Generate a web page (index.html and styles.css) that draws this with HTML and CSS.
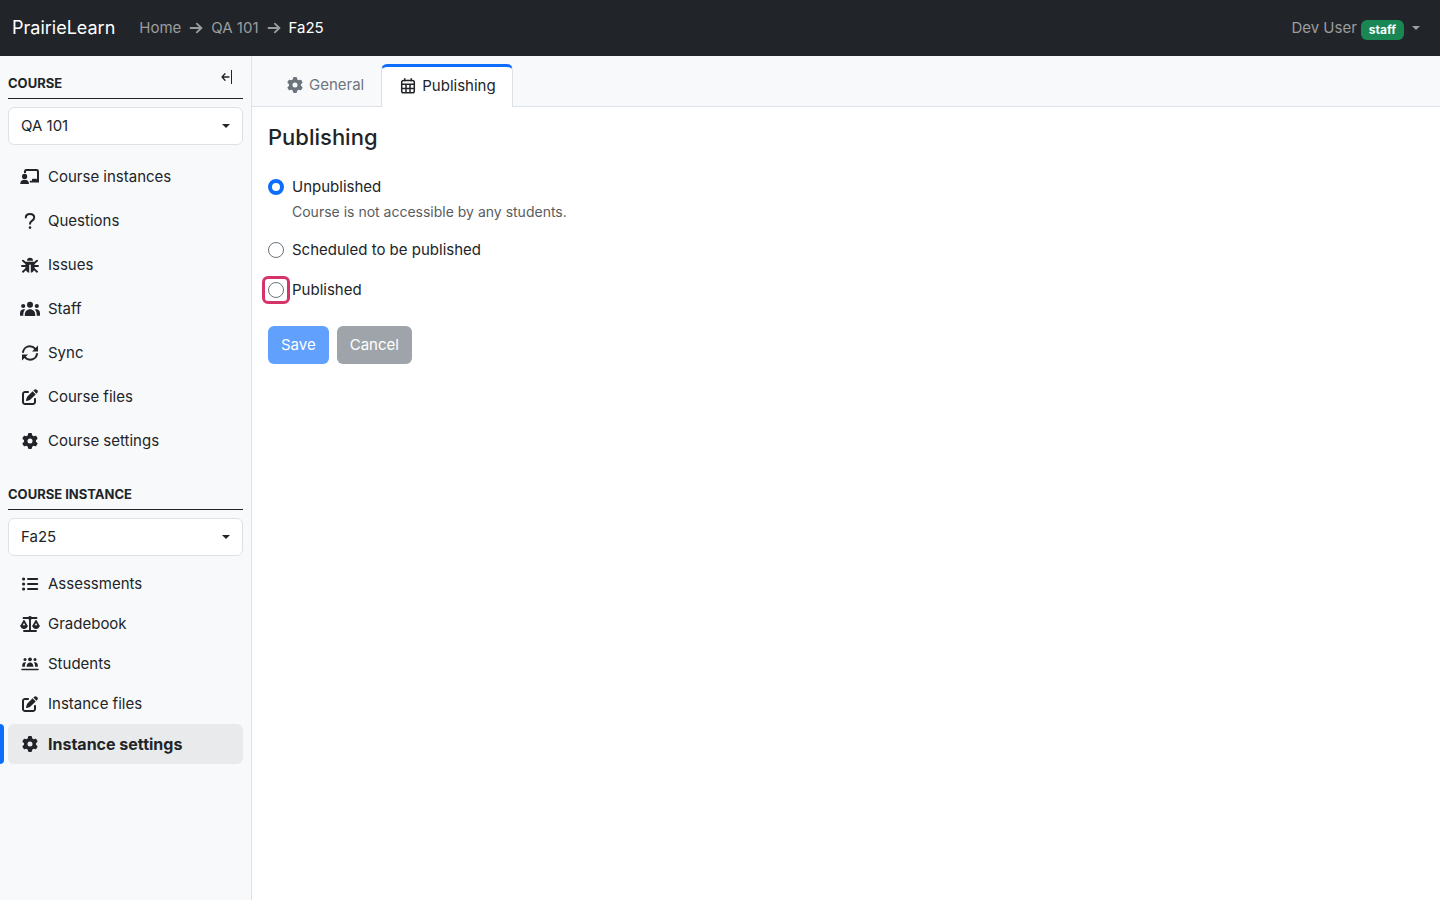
FILE: index.html
```html
<!DOCTYPE html>
<html lang="en">
<head>
<meta charset="utf-8">
<meta name="viewport" content="width=device-width, initial-scale=1">
<title>Publishing | PrairieLearn</title>
<link rel="stylesheet" href="styles.css">
</head>

<body>

<!-- icons that are used more than once -->
<svg class="icon-defs" aria-hidden="true">
  <symbol id="icon-gear" viewBox="-64 0 640 512">
    <path d="M495.9 166.6c3.2 8.7 .5 18.4-6.4 24.6l-43.3 39.4c1.1 8.3 1.7 16.8 1.7 25.4s-.6 17.1-1.7 25.4l43.3 39.4c6.9 6.2 9.6 15.9 6.4 24.6c-4.4 11.9-9.7 23.3-15.8 34.3l-4.7 8.1c-6.6 11-14 21.4-22.1 31.2c-5.9 7.2-15.7 9.6-24.5 6.8l-55.7-17.7c-13.4 10.3-28.2 18.9-44 25.4l-12.5 57.1c-2 9.1-9 16.3-18.2 17.8c-13.8 2.3-28 3.5-42.5 3.5s-28.7-1.2-42.5-3.5c-9.2-1.5-16.2-8.7-18.2-17.8l-12.5-57.1c-15.8-6.5-30.6-15.1-44-25.4L83.1 425.9c-8.8 2.8-18.6 .3-24.5-6.8c-8.1-9.8-15.5-20.2-22.1-31.2l-4.7-8.1c-6.1-11-11.4-22.4-15.8-34.3c-3.2-8.7-.5-18.4 6.4-24.6l43.3-39.4C64.6 273.1 64 264.6 64 256s.6-17.1 1.7-25.4L22.4 191.2c-6.9-6.2-9.6-15.9-6.4-24.6c4.4-11.9 9.7-23.3 15.8-34.3l4.7-8.1c6.6-11 14-21.4 22.1-31.2c5.9-7.2 15.7-9.6 24.5-6.8l55.7 17.7c13.4-10.3 28.2-18.9 44-25.4l12.5-57.1c2-9.1 9-16.3 18.2-17.8C227.3 1.2 241.5 0 256 0s28.7 1.2 42.5 3.5c9.2 1.5 16.2 8.7 18.2 17.8l12.5 57.1c15.8 6.5 30.6 15.1 44 25.4l55.7-17.7c8.8-2.8 18.6-.3 24.5 6.8c8.1 9.8 15.5 20.2 22.1 31.2l4.7 8.1c6.1 11 11.4 22.4 15.8 34.3zM256 336a80 80 0 1 0 0-160 80 80 0 1 0 0 160z"/>
  </symbol>
  <symbol id="icon-edit" viewBox="-64 0 640 512">
    <path d="M471.6 21.7c-21.9-21.9-57.3-21.9-79.2 0L362.3 51.7l97.9 97.9 30.1-30.1c21.9-21.9 21.9-57.3 0-79.2L471.6 21.7zm-299.2 220c-6.1 6.1-10.8 13.6-13.5 21.9l-29.6 88.8c-2.9 8.6-.6 18.1 5.8 24.6s15.9 8.7 24.6 5.8l88.8-29.6c8.2-2.7 15.7-7.4 21.9-13.5L437.7 172.3 339.7 74.3 172.4 241.7zM96 64C43 64 0 107 0 160V416c0 53 43 96 96 96H352c53 0 96-43 96-96V320c0-17.7-14.3-32-32-32s-32 14.3-32 32v96c0 17.7-14.3 32-32 32H96c-17.7 0-32-14.3-32-32V160c0-17.7 14.3-32 32-32h96c17.7 0 32-14.3 32-32s-14.3-32-32-32H96z"/>
  </symbol>
  <symbol id="icon-arrow" viewBox="0 0 14 14">
    <path d="M1.5 7h11M7.8 2.6L12.4 7l-4.6 4.4" fill="none" stroke="currentColor" stroke-width="1.8" stroke-linecap="round" stroke-linejoin="round"/>
  </symbol>
</svg>

<header class="navbar">
  <a class="brand" href="#">PrairieLearn</a>
  <nav class="crumbs" aria-label="Breadcrumb">
    <a href="#">Home</a>
    <svg class="crumb-arrow"><use href="#icon-arrow"/></svg>
    <a href="#">QA 101</a>
    <svg class="crumb-arrow"><use href="#icon-arrow"/></svg>
    <a href="#" class="current" aria-current="page">Fa25</a>
  </nav>
  <button type="button" class="user-menu">
    <span>Dev User</span>
    <span class="badge">staff</span>
    <span class="caret"></span>
  </button>
</header>

<div class="app">
  <aside class="sidebar">
    <div class="side-head">
      <h2>Course</h2>
      <button type="button" class="collapse" aria-label="Collapse side nav">
        <svg width="12" height="14" viewBox="0 0 12 14" fill="none" stroke="currentColor">
          <path d="M8 7H1M4 3.8L1 7l3 3.2" stroke-width="1.3" stroke-linecap="round" stroke-linejoin="round"/>
          <path d="M10.500 0v14" stroke-width="1"/>
        </svg>
      </button>
    </div>
    <div class="picker">
      <select aria-label="Course">
        <option>QA 101</option>
      </select>
    </div>
    <nav class="side-nav roomy" aria-label="Course">
      <a href="#">
        <svg class="icon" viewBox="0 0 20 16">
          <path d="M5 4V2.4A1.4 1.4 0 0 1 6.4 1H16.600A1.4 1.4 0 0 1 18 2.400V12" fill="none" stroke="currentColor" stroke-width="2"/>
          <path d="M9.800 13.500h9.200v-1.700h-2V10.600a.8.800 0 0 0-.8-.8h-3.400a.8.800 0 0 0-.8.800v1.200h-2.200z"/>
          <circle cx="4.600" cy="7.400" r="2.600"/>
          <path d="M.2 15c0-2.700 1.700-4.200 4.400-4.200S9 12.300 9 15z"/>
        </svg>
        Course instances
      </a>
      <a href="#">
        <svg class="icon" viewBox="0 0 20 16">
          <path d="M5.800 4.600C5.800 2.400 7.400 1 10 1s4.200 1.500 4.200 3.500c0 1.700-1 2.500-2.300 3.300-1.300.8-1.900 1.300-1.900 2.900" fill="none" stroke="currentColor" stroke-width="2" stroke-linecap="round"/>
          <circle cx="10" cy="14.600" r="1.300"/>
        </svg>
        Questions
      </a>
      <a href="#">
        <svg class="icon" viewBox="0 0 20 16">
          <path d="M7 3.700a3 3 0 0 1 6 0z"/>
          <path d="M7 4.800h6c.9 0 1.500.7 1.500 1.500V11c0 2.500-1.500 4.300-3.700 4.700V8.200a.8.800 0 0 0-1.600 0v7.500C7 15.300 5.500 13.500 5.500 11V6.300c0-.8.600-1.500 1.500-1.500z"/>
          <path d="M6.300 6.500L3 3.700M13.700 6.500L17 3.700M6 9H2M14 9h4M6.300 11.600L3 14.700M13.700 11.600l3.300 3.100" fill="none" stroke="currentColor" stroke-width="1.900" stroke-linecap="round"/>
        </svg>
        Issues
      </a>
      <a href="#">
        <svg class="icon" viewBox="0 0 20 16">
          <circle cx="10" cy="3.800" r="3"/>
          <circle cx="3.200" cy="5" r="2.100"/>
          <circle cx="16.800" cy="5" r="2.100"/>
          <path d="M4.800 15v-1.300C4.800 10.600 7 8.300 10 8.300s5.200 2.300 5.200 5.400V15z"/>
          <path d="M0 14.800v-2.600c0-2.600 2.500-4.500 5.200-3.600C4 9.900 3.300 11.500 3.300 13.600v1.200zM20 14.800v-2.600c0-2.600-2.500-4.500-5.200-3.600 1.200 1.300 1.900 2.900 1.900 5v1.200z"/>
        </svg>
        Staff
      </a>
      <a href="#">
        <svg class="icon" viewBox="0 0 20 16">
          <path d="M3 7C3.500 3.700 6.400 1.300 9.800 1.300c2.400 0 4.100 1 5.500 2.600M17 9c-.5 3.300-3.400 5.700-6.800 5.700-2.400 0-4.100-1-5.500-2.600" fill="none" stroke="currentColor" stroke-width="2" stroke-linecap="round"/>
          <path d="M18 .6v6h-6zM2 15.400v-6h6z"/>
        </svg>
        Sync
      </a>
      <a href="#">
        <svg class="icon"><use href="#icon-edit"/></svg>
        Course files
      </a>
      <a href="#">
        <svg class="icon"><use href="#icon-gear"/></svg>
        Course settings
      </a>
    </nav>

    <div class="side-head">
      <h2>Course instance</h2>
    </div>
    <div class="picker">
      <select aria-label="Course instance">
        <option>Fa25</option>
      </select>
    </div>
    <nav class="side-nav" aria-label="Course instance">
      <a href="#">
        <svg class="icon" viewBox="0 0 20 16">
          <path d="M8 3h9.200M8 8h9.200M8 13h9.200" fill="none" stroke="currentColor" stroke-width="2" stroke-linecap="round"/>
          <circle cx="3.600" cy="3" r="1.600"/>
          <circle cx="3.600" cy="8" r="1.600"/>
          <circle cx="3.600" cy="13" r="1.600"/>
        </svg>
        Assessments
      </a>
      <a href="#">
        <svg class="icon" viewBox="0 0 20 16">
          <path d="M3.500 2h13M10 1.500V15M4 15h12" fill="none" stroke="currentColor" stroke-width="1.900" stroke-linecap="round"/>
          <circle cx="10" cy="2" r="1.900"/>
          <path d="M4 5L1.300 10M4 5l2.700 5M16 5l-2.700 5M16 5l2.700 5" fill="none" stroke="currentColor" stroke-width="1.700" stroke-linecap="round"/>
          <path d="M.3 9.300h7.400C7.700 11.500 6 13 4 13S.3 11.500.3 9.300zM12.300 9.300h7.400c0 2.200-1.700 3.700-3.700 3.700s-3.700-1.500-3.700-3.700z"/>
        </svg>
        Gradebook
      </a>
      <a href="#">
        <svg class="icon" viewBox="0 0 20 16">
          <circle cx="10" cy="3.300" r="1.900"/>
          <circle cx="5" cy="3.500" r="1.500"/>
          <circle cx="15" cy="3.500" r="1.500"/>
          <path d="M6.600 10.800c0-2.700 1.300-4.400 3.400-4.400s3.400 1.700 3.400 4.400z"/>
          <path d="M2.200 10.800V9.200c0-2 1.700-3.300 3.800-2.700-.8 1.100-1.100 2.500-1.100 4.300zM17.800 10.800V9.200c0-2-1.700-3.300-3.800-2.700.8 1.100 1.100 2.500 1.100 4.300z"/>
          <path d="M2 13.500h16" stroke="currentColor" stroke-width="1.600" stroke-linecap="round"/>
        </svg>
        Students
      </a>
      <a href="#">
        <svg class="icon"><use href="#icon-edit"/></svg>
        Instance files
      </a>
      <a href="#" class="active" aria-current="page">
        <svg class="icon"><use href="#icon-gear"/></svg>
        Instance settings
      </a>
    </nav>
  </aside>

  <div class="content">
    <nav class="tabs" aria-label="Instance settings">
      <a href="#" class="tab">
        <svg class="icon"><use href="#icon-gear"/></svg>
        General
      </a>
      <a href="#" class="tab active" aria-current="page">
        <svg class="icon line" viewBox="0 0 20 16">
          <rect x="3.700" y="2.500" width="12.600" height="12.300" rx="1.800"/>
          <path d="M3.800 6.300h12.400M3.800 10.400h12.400M8 6.300v8M12 6.300v8"/>
          <path d="M6.800.8v2M13.200.8v2" stroke-linecap="round"/>
        </svg>
        Publishing
      </a>
    </nav>

    <main>
      <h1>Publishing</h1>
      <form>
        <div class="choice">
          <input type="radio" name="status" id="unpublished" checked>
          <label for="unpublished">Unpublished</label>
          <p class="hint">Course is not accessible by any students.</p>
        </div>
        <div class="choice">
          <input type="radio" name="status" id="scheduled">
          <label for="scheduled">Scheduled to be published</label>
        </div>
        <div class="choice">
          <input type="radio" name="status" id="published" class="marked">
          <label for="published">Published</label>
        </div>
        <div class="actions">
          <button type="submit" class="btn save" disabled>Save</button>
          <button type="button" class="btn cancel" disabled>Cancel</button>
        </div>
      </form>
    </main>
  </div>
</div>

</body>
</html>
```

FILE: styles.css
```css
* {
  box-sizing: border-box;
}

body {
  margin: 0;
  min-height: 100vh;
  display: flex;
  flex-direction: column;
  font: 15px/24px Inter, sans-serif;
  color: #212529;
  background: #fff;
}

a {
  color: inherit;
  text-decoration: none;
}

button, select, input {
  font: inherit;
  color: inherit;
  margin: 0;
}

h1, h2, p {
  margin: 0;
}

.icon-defs {
  display: none;
}

.icon {
  width: 20px;
  height: 16px;
  flex: none;
  fill: currentColor;
}

.icon.line {
  fill: none;
  stroke: currentColor;
  stroke-width: 1.5;
}

.caret,
.picker::after {
  width: 0;
  height: 0;
  border: 4px solid transparent;
  border-top-color: currentColor;
  border-bottom: 0;
}

/* top bar */

.navbar {
  display: flex;
  align-items: center;
  height: 56px;
  padding: 0 20px 0 12px;
  background: #212529;
  color: #9b9d9e;
}

.brand {
  margin-right: 24px;
  font-size: 18px;
  color: #fff;
}

.crumbs {
  display: flex;
  align-items: center;
  gap: 8px;
}

.crumb-arrow {
  width: 14px;
  height: 14px;
}

.crumbs .current {
  color: #fff;
}

.user-menu {
  display: flex;
  align-items: center;
  margin-left: auto;
  padding: 0;
  border: 0;
  background: none;
}

.badge {
  margin: 3px 8px 0 4px;
  padding: 4px 8px;
  border-radius: 6px;
  background: #198754;
  color: #fff;
  font-size: 12px;
  line-height: 12px;
  font-weight: 700;
}

/* side nav */

.app {
  display: flex;
  flex: 1;
}

.sidebar {
  width: 252px;
  flex: none;
  padding: 0 8px;
  background: #f8f9fa;
  border-right: 1px solid #dee2e6;
}

.side-head {
  display: flex;
  justify-content: space-between;
  height: 43px;
  padding-top: 12px;
  margin-bottom: 8px;
  border-bottom: 1px solid #212529;
}

.side-head h2 {
  font-size: 13px;
  line-height: 30px;
  font-weight: 700;
  text-transform: uppercase;
}

.collapse {
  height: 18px;
  padding: 0 10px 0 0;
  border: 0;
  background: none;
}

.collapse svg {
  display: block;
}

.picker {
  position: relative;
}

.picker::after {
  content: "";
  position: absolute;
  top: 17px;
  right: 13px;
  pointer-events: none;
}

.picker select {
  display: block;
  width: 100%;
  height: 38px;
  padding: 0 12px;
  appearance: none;
  border: 1px solid #dee2e6;
  border-radius: 6px;
  background: #fff;
}

.side-nav {
  display: flex;
  flex-direction: column;
  margin-top: 8px;
}

.side-nav.roomy {
  gap: 4px;
  margin: 12px 0 6px;
}

.side-nav a {
  position: relative;
  display: flex;
  align-items: center;
  gap: 8px;
  height: 40px;
  padding: 0 12px;
  border-radius: 6px;
}

.side-nav a.active {
  background: #e9eaeb;
  font-size: 16px;
  font-weight: 700;
}

.side-nav a.active::before {
  content: "";
  position: absolute;
  left: -8px;
  width: 4px;
  height: 100%;
  border-radius: 0 4px 4px 0;
  background: #0d6efd;
}

/* content */

.content {
  flex: 1;
  min-width: 0;
}

.tabs {
  display: flex;
  padding: 8px 16px 0;
  background: #f8f9fa;
  border-bottom: 1px solid #dee2e6;
}

.tab {
  display: flex;
  align-items: center;
  gap: 4px;
  height: 42px;
  padding: 0 17px;
  color: #6c757d;
}

.tab.active {
  height: 43px;
  margin-bottom: -1px;
  padding: 0 16px 2px;
  border: 1px solid #dee2e6;
  border-top: 3px solid #0d6efd;
  border-bottom: 0;
  border-radius: 6px 6px 0 0;
  background: #fff;
  color: #212529;
}

main {
  padding: 16px;
}

h1 {
  margin-bottom: 24px;
  font-size: 22px;
  line-height: 28px;
  font-weight: 500;
}

.choice {
  display: grid;
  grid-template-columns: 16px 1fr;
  column-gap: 8px;
  align-items: center;
  margin-bottom: 16px;
}

.choice label {
  justify-self: start;
}

.choice input {
  width: 16px;
  height: 16px;
  appearance: none;
  border: 1px solid #6c757d;
  border-radius: 50%;
  background: #fff;
}

.choice input:checked {
  border: 4px solid #0d6efd;
}

.choice input.marked {
  position: relative;
}

.choice input.marked::before {
  content: "";
  position: absolute;
  inset: -7px;
  border: 3px solid #d63369;
  border-radius: 6px;
}

.hint {
  grid-column: 2;
  margin-top: 2px;
  font-size: 14px;
  line-height: 21px;
  color: #595c5f;
}

.actions {
  display: flex;
  gap: 8px;
  margin-top: 24px;
}

.btn {
  height: 38px;
  padding: 0 13px;
  border: 0;
  border-radius: 6px;
  color: #fff;
  opacity: .65;
}

.save {
  background: #0d6efd;
}

.cancel {
  background: #6c757d;
}
```
